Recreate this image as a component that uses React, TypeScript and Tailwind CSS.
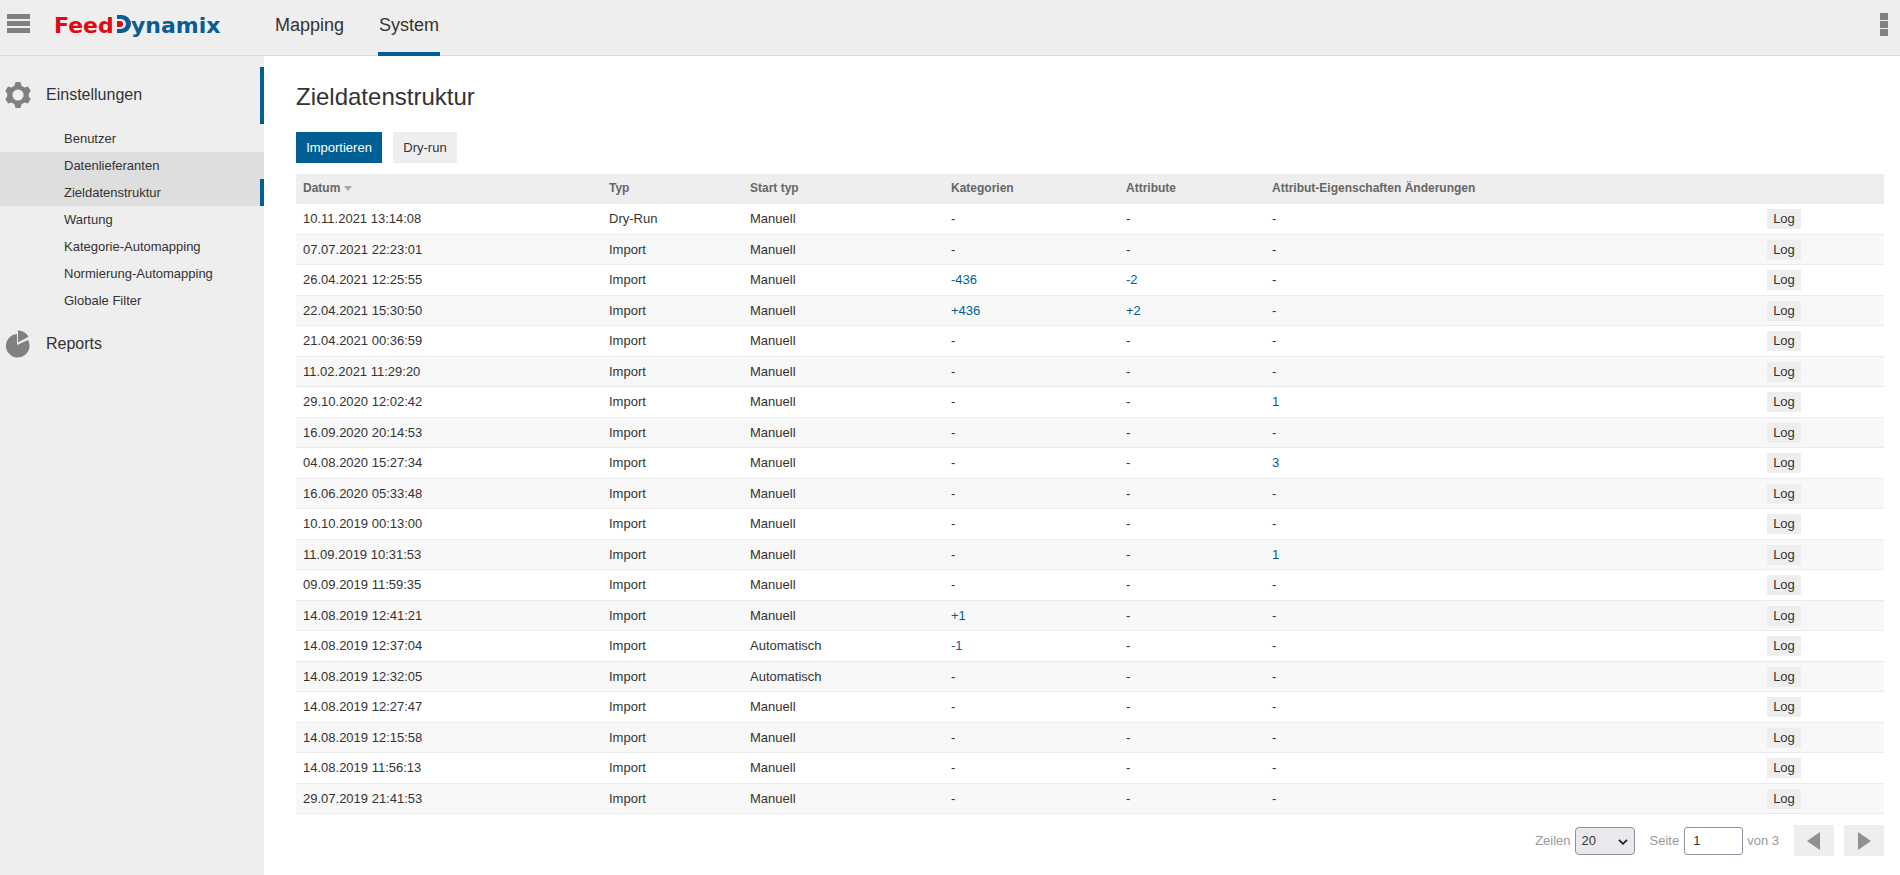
import React, { useState } from 'react';

interface ImportRun {
  date: string;
  type?: string;
  start?: string;
  categories?: string;
  attributes?: string;
  changes?: string;
}

const menuItems = [
  'Benutzer',
  'Datenlieferanten',
  'Zieldatenstruktur',
  'Wartung',
  'Kategorie-Automapping',
  'Normierung-Automapping',
  'Globale Filter',
];

const runs: ImportRun[] = [
  { date: '10.11.2021 13:14:08', type: 'Dry-Run' },
  { date: '07.07.2021 22:23:01' },
  { date: '26.04.2021 12:25:55', categories: '-436', attributes: '-2' },
  { date: '22.04.2021 15:30:50', categories: '+436', attributes: '+2' },
  { date: '21.04.2021 00:36:59' },
  { date: '11.02.2021 11:29:20' },
  { date: '29.10.2020 12:02:42', changes: '1' },
  { date: '16.09.2020 20:14:53' },
  { date: '04.08.2020 15:27:34', changes: '3' },
  { date: '16.06.2020 05:33:48' },
  { date: '10.10.2019 00:13:00' },
  { date: '11.09.2019 10:31:53', changes: '1' },
  { date: '09.09.2019 11:59:35' },
  { date: '14.08.2019 12:41:21', categories: '+1' },
  { date: '14.08.2019 12:37:04', start: 'Automatisch', categories: '-1' },
  { date: '14.08.2019 12:32:05', start: 'Automatisch' },
  { date: '14.08.2019 12:27:47' },
  { date: '14.08.2019 12:15:58' },
  { date: '14.08.2019 11:56:13' },
  { date: '29.07.2019 21:41:53' },
];

const Logo: React.FC = () => (
  <a href="#" aria-label="FeedDynamix" className="block">
    <svg width="170" height="32" viewBox="0 0 170 32" className="font-['DejaVu_Sans',sans-serif] font-bold">
      <text x="0" y="24" fontSize="22" fill="#e30613">
        Feed
      </text>
      <path d="M63 6h5a9 9 0 0 1 0 18h-5v-4h4a4.500 4.500 0 0 0 0-10h-4z" fill="#0b5c95" />
      <path d="M63 12h3a3 3 0 0 1 0 6h-3z" fill="#e30613" />
      <text x="77" y="24" fontSize="22" fill="#0b5c95">
        ynamix
      </text>
    </svg>
  </a>
);

const Header: React.FC = () => (
  <header className="flex h-14 items-start border-b border-[#dcdcdc] bg-[#eee]">
    <button type="button" aria-label="Menü" className="mt-[14px] ml-[7px]">
      <svg width="23" height="19" viewBox="0 0 23 19" fill="#808080">
        <path d="M0 0h23v5H0zM0 7h23v5H0zM0 14h23v5H0z" />
      </svg>
    </button>
    <div className="mt-[9px] ml-6 w-[220px]">
      <Logo />
    </div>
    <nav className="flex h-14 gap-[33px] text-lg leading-[50px]">
      <a href="#mapping" className="px-px">Mapping</a>
      <a href="#system" className="border-b-4 border-[#005f94] px-px">System</a>
    </nav>
    <button type="button" aria-label="Optionen" className="mt-[13px] mr-3 ml-auto">
      <svg width="8" height="23" viewBox="0 0 8 23" fill="#808080">
        <path d="M0 0h8v7H0zM0 8h8v7H0zM0 16h8v7H0z" />
      </svg>
    </button>
  </header>
);

const GearIcon: React.FC = () => (
  <svg width="26" height="28" viewBox="0 0 26 28" fill="#808080">
    <path
      fillRule="evenodd"
      d="M10.500 1h5l1 3.800 3 1.700 3.500-1 2.700 4.500-1.900 2.600v2.800l1.900 2.600-2.700 4.500-3.500-1-3 1.700-1 3.800h-5l-1-3.800-3-1.700-3.500 1L.300 18l1.900-2.600v-2.800L.300 10 3 5.500l3.500 1 3-1.700zM13 8.400a5.600 5.600 0 1 0 0 11.200 5.600 5.600 0 0 0 0-11.200z"
    />
  </svg>
);

const PieIcon: React.FC = () => (
  <svg width="26" height="28" viewBox="0 0 26 28" fill="#808080">
    <path d="M12 4v11l11-5a11.800 11.800 0 1 1-11-6z" />
    <path d="M13 0.500c4.500 0 8.500 2.500 10.500 6.300L13 12.500z" />
  </svg>
);

const Sidebar: React.FC = () => (
  <aside className="w-[264px] shrink-0 bg-[#eee] pt-[11px]">
    <a href="#einstellungen" className="flex h-[57px] items-center gap-[15px] border-r-4 border-[#005f94] pb-0.5 pl-[5px] text-base">
      <GearIcon />
      Einstellungen
    </a>
    <ul className="pt-px text-[13px] leading-[27px]">
      {menuItems.map((item) => (
        <li key={item}>
          <a
            href="#"
            className={`block pl-16 ${item === 'Zieldatenstruktur' ? 'border-r-4 border-[#005f94] bg-[#dedede]' : ''} ${
              item === 'Datenlieferanten' ? 'bg-[#dedede]' : ''
            }`}
          >
            {item}
          </a>
        </li>
      ))}
    </ul>
    <a href="#reports" className="flex h-[60px] items-center gap-[15px] pl-[5px] text-base">
      <PieIcon />
      Reports
    </a>
  </aside>
);

const Count: React.FC<{ value?: string }> = ({ value }) => (
  <td className="pl-[7px]">
    {value ? <a href="#" className="text-[#005f94]">{value}</a> : '-'}
  </td>
);

const RunsTable: React.FC = () => (
  <table className="mt-[11px] w-full table-fixed border-separate border-spacing-0 text-left text-[13px] leading-4">
    <thead>
      <tr className="h-[30px] bg-[#eee] text-xs text-[#666]">
        <th className="w-[306px] pb-0.5 pl-[7px]">
          <span className="flex items-center gap-1">
            Datum
            <svg width="8" height="5" viewBox="0 0 8 5" fill="#aaa">
              <path d="M0 0h8L4 5z" />
            </svg>
          </span>
        </th>
        <th className="w-[141px] pb-0.5 pl-[7px]">Typ</th>
        <th className="w-[201px] pb-0.5 pl-[7px]">Start typ</th>
        <th className="w-[175px] pb-0.5 pl-[7px]">Kategorien</th>
        <th className="w-[146px] pb-0.5 pl-[7px]">Attribute</th>
        <th className="pb-0.5 pl-[7px]">Attribut-Eigenschaften Änderungen</th>
        <th className="w-[124px]"></th>
      </tr>
    </thead>
    <tbody>
      {runs.map((run) => (
        <tr key={run.date} className="odd:h-[31px] even:h-[30px] even:bg-[#f8f8f8] [&>td]:border-b [&>td]:border-[#ebebeb]">
          <td className="pl-[7px]">{run.date}</td>
          <td className="pl-[7px]">{run.type ?? 'Import'}</td>
          <td className="pl-[7px]">{run.start ?? 'Manuell'}</td>
          <Count value={run.categories} />
          <Count value={run.attributes} />
          <Count value={run.changes} />
          <td className="pl-[7px]">
            <button type="button" className="block h-5 w-[34px] bg-[#eee]">Log</button>
          </td>
        </tr>
      ))}
    </tbody>
  </table>
);

const Pager: React.FC = () => {
  const [rows, setRows] = useState('20');
  const [page, setPage] = useState('1');

  return (
    <div className="mt-[11px] flex items-center justify-end text-[13px] text-[#999]">
      <label htmlFor="rows">Zeilen</label>
      <div className="relative ml-1">
        <select
          id="rows"
          value={rows}
          onChange={(e) => setRows(e.target.value)}
          className="block h-7 w-[60px] appearance-none rounded border border-[#8f8f9d] bg-[#e9e9ed] pl-1.5 text-[#333]"
        >
          <option>20</option>
          <option>50</option>
          <option>100</option>
        </select>
        <svg width="10" height="6" viewBox="0 0 10 6" className="pointer-events-none absolute top-[12px] right-[7px]" fill="none" stroke="#222" strokeWidth="1.8">
          <path d="M1 0.800l4 4 4-4" />
        </svg>
      </div>
      <label htmlFor="page" className="ml-[15px]">Seite</label>
      <input
        id="page"
        value={page}
        onChange={(e) => setPage(e.target.value)}
        className="ml-[5px] h-7 w-[59px] rounded-[3px] border border-[#8f8f9d] bg-white pl-2 text-[#333]"
      />
      <span className="ml-1">von 3</span>
      <button type="button" aria-label="Zurück" className="ml-[15px] flex h-[31px] w-10 items-center justify-center bg-[#eee]">
        <svg width="14" height="18" viewBox="0 0 14 18" fill="#909090">
          <path d="M13 0v18L0 9z" />
        </svg>
      </button>
      <button type="button" aria-label="Weiter" className="ml-[10px] flex h-[31px] w-10 items-center justify-center bg-[#eee]">
        <svg width="14" height="18" viewBox="0 0 14 18" fill="#909090">
          <path d="M1 0v18l13-9z" />
        </svg>
      </button>
    </div>
  );
};

const App: React.FC = () => {
  return (
    <div className="flex min-h-screen flex-col bg-white font-['Liberation_Sans',Arial,sans-serif] text-[#333]">
      <Header />
      <div className="flex grow">
        <Sidebar />
        <main className="min-w-0 grow pt-[25px] pr-4 pl-8">
          <h1 className="text-2xl leading-8">Zieldatenstruktur</h1>
          <div className="mt-[19px] flex gap-[11px] text-[13px]">
            <button type="button" className="h-[31px] w-[86px] bg-[#005f94] text-white">Importieren</button>
            <button type="button" className="h-[31px] w-16 bg-[#eee]">Dry-run</button>
          </div>
          <RunsTable />
          <Pager />
        </main>
      </div>
    </div>
  );
};

export default App;
